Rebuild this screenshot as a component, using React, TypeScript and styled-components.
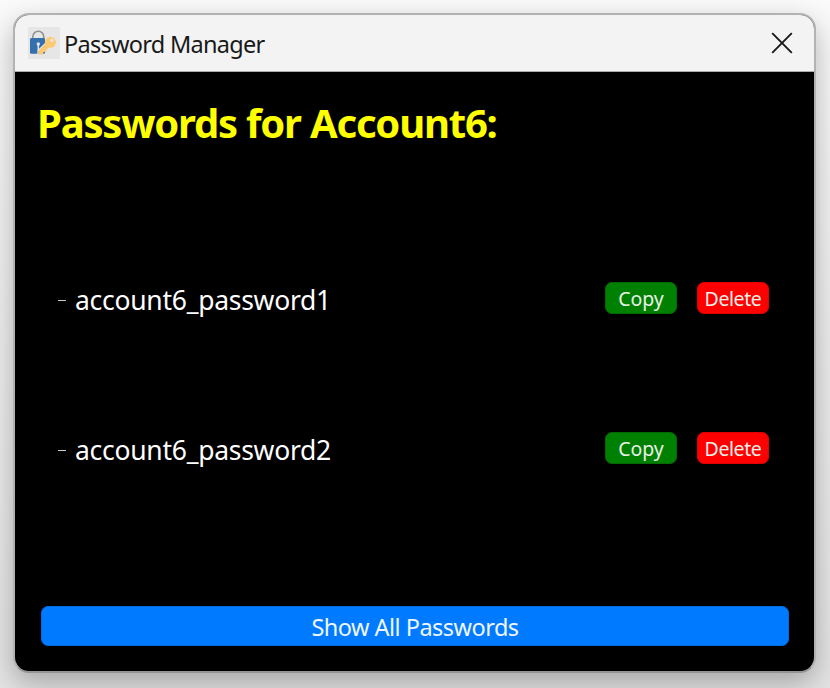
import React from "react";
import styled, { createGlobalStyle } from "styled-components";

const GlobalStyle = createGlobalStyle`
  * { box-sizing: border-box; }
  body { margin: 0; overflow: hidden; }
`;

const Desktop = styled.main`
  width: 830px;
  height: 688px;
  padding: 13px 14px 15px 13px;
  overflow: hidden;
  background: linear-gradient(#fafafa, #eeeeee 50%, #e4e4e4);
  font-family: "Noto Sans", "Open Sans", sans-serif;
`;

const Window = styled.section`
  display: flex;
  flex-direction: column;
  width: 803px;
  height: 660px;
  border: 2px solid #b2b2b2;
  border-bottom-color: #989393;
  border-radius: 16px;
  overflow: hidden;
  background: #000;
  box-shadow: 0 10px 28px rgba(0, 0, 0, 0.28);
`;

const TitleBar = styled.header`
  display: flex;
  align-items: center;
  flex: 0 0 57px;
  padding: 0 21px 0 13px;
  background: #f3f3f3;
  border-bottom: 1px solid #aaa;
`;

const Text = styled.span<{ $size: number; $track: number; $shift?: number }>`
  font-size: ${(p) => p.$size}px;
  letter-spacing: ${(p) => p.$track}px;
  line-height: 1;
  white-space: nowrap;
  padding-top: ${(p) => p.$shift ?? 0}px;
`;

const Title = styled(Text)`
  flex: 1;
  margin-left: 4px;
  color: #191919;
`;

const CloseButton = styled.button`
  display: flex;
  padding: 0;
  border: 0;
  background: none;
`;

const Content = styled.div`
  display: flex;
  flex-direction: column;
  flex: 1;
  padding: 30px 25px 25px 22px;
`;

const Heading = styled.h1`
  margin: 0;
  height: 42px;
  color: #ff0;
  font-size: 40px;
  line-height: 42px;
  font-weight: 700;
  letter-spacing: -1.2px;
  white-space: nowrap;
`;

const List = styled.ul`
  list-style: none;
  margin: 80px 0 0;
  padding: 0;
  flex: 1;
`;

const Row = styled.li`
  display: flex;
  align-items: center;
  height: 150px;
  padding: 0 20px 0 21px;
`;

const Dash = styled.span`
  width: 8px;
  height: 1px;
  margin: 2px 9px 0 0;
  background: #ccc;
`;

const Password = styled(Text)`
  flex: 1;
  color: #fff;
`;

const Action = styled.button<{ $color: string; $edge: string }>`
  display: flex;
  align-items: center;
  justify-content: center;
  width: 72px;
  height: 32px;
  margin: 0 0 2px 20px;
  padding: 0;
  border: 1px solid ${(p) => p.$edge};
  border-radius: 7px;
  background: ${(p) => p.$color};
  color: #e8f0e8;
  font-family: inherit;
`;

const ShowAll = styled.button`
  display: flex;
  align-items: center;
  justify-content: center;
  height: 40px;
  margin-left: 4px;
  padding: 0;
  border: 1px solid #006be0;
  border-radius: 7px;
  background: #007bff;
  color: #f0f6ff;
  font-family: inherit;
`;

const AppIcon = () => (
  <svg width="32" height="32" viewBox="0 0 32 32">
    <rect width="32" height="32" fill="#e6e6e6" />
    <path d="M4.8 12V9.8a5.5 5.5 0 0 1 11 0V12" fill="none" stroke="#929292" strokeWidth="1.6" />
    <rect x="2" y="11" width="15" height="15.7" rx="1.5" fill="#346fae" />
    <circle cx="10.3" cy="17" r="1.7" fill="#e6e6e6" />
    <path d="M10.3 17v6" stroke="#e6e6e6" strokeWidth="1.5" />
    <path d="M17.5 16.5l-7.5 7.3v4" fill="none" stroke="#e6e6e6" strokeWidth="1.4" />
    <path d="M17.5 17l-6.8 6.8v3.6h4l1-2.3 2.3-.4.6-2.2 2.8-2.2z" fill="#ffc971" />
    <circle cx="22.4" cy="15.3" r="5.5" fill="#ffc971" />
    <circle cx="24" cy="13.3" r="1.8" fill="#ece5d6" />
  </svg>
);

const accounts = ["account6_password1", "account6_password2"];

export default function App() {
  return (
    <>
      <GlobalStyle />
      <Desktop>
        <Window>
          <TitleBar>
            <AppIcon />
            <Title $size={23.5} $track={-0.72} $shift={4}>Password Manager</Title>
            <CloseButton aria-label="Close">
              <svg width="22" height="22" viewBox="0 0 22 22">
                <path d="M1.2 1.2l19.6 19.6M20.8 1.2L1.2 20.8" stroke="#191919" strokeWidth="1.9" />
              </svg>
            </CloseButton>
          </TitleBar>
          <Content>
            <Heading>Passwords for Account6:</Heading>
            <List>
              {accounts.map((name) => (
                <Row key={name}>
                  <Dash />
                  <Password $size={26.5} $track={-0.27} $shift={2}>{name}</Password>
                  <Action $color="#008000" $edge="#006c00">
                    <Text $size={19.5} $track={-0.1} $shift={1}>Copy</Text>
                  </Action>
                  <Action $color="#ff0000" $edge="#e00000">
                    <Text $size={19.5} $track={-0.4} $shift={1}>Delete</Text>
                  </Action>
                </Row>
              ))}
            </List>
            <ShowAll>
              <Text $size={23.5} $track={-0.52} $shift={4}>Show All Passwords</Text>
            </ShowAll>
          </Content>
        </Window>
      </Desktop>
    </>
  );
}
